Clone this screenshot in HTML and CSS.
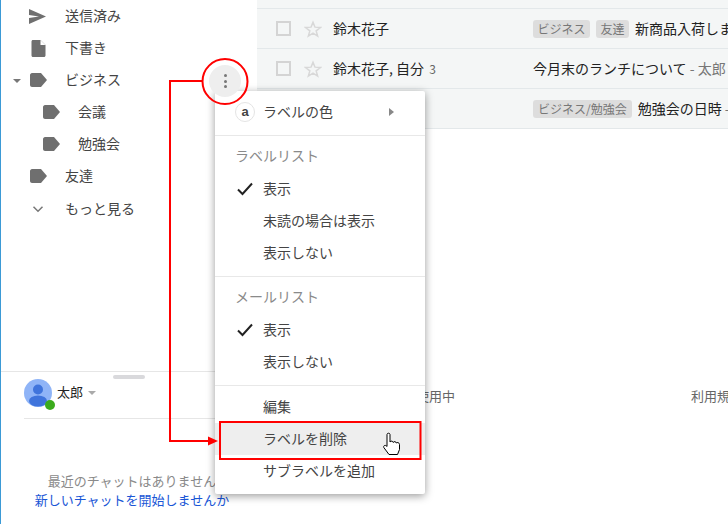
FILE: index.html
```html
<!DOCTYPE html>
<html lang="ja">
<head>
  <meta charset="UTF-8" />
  <title>ラベルを削除</title>
  <link rel="stylesheet" href="styles.css">
</head>
<body>
  <div class="app">
    <aside class="sidebar">
      <nav class="nav">
        <div class="nav-row">
          <svg class="nav-icon nav-send" width="17" height="15" viewBox="0 0 17 15"><path d="M0 0L17 7.500L0 15V9L10 7.500L0 6Z" fill="#6f6f6f"/></svg>
          <span>送信済み</span>
        </div>
        <div class="nav-row">
          <svg class="nav-icon" width="15" height="17" viewBox="0 0 15 17"><path d="M2 0H9.5L14.500 5V15.500C14.500 16.300 13.800 17 13 17H2C1 17 .5 16.300 .5 15.500V1.500C.5 .7 1 0 2 0Z" fill="#6f6f6f"/><path d="M9.500 0V5H14.500Z" fill="#fff"/></svg>
          <span>下書き</span>
        </div>
        <div class="nav-row">
          <svg class="caret" width="8" height="4" viewBox="0 0 8 4"><path d="M0 0H8L4 4Z" fill="#777"/></svg>
          <svg class="nav-icon" width="17" height="14" viewBox="0 0 17 14"><path class="label-shape" d="M2 0H11L17 7L11 14H2C1 14 0 13 0 12V2C0 1 1 0 2 0Z"/></svg>
          <span>ビジネス</span>
        </div>
        <div class="nav-row nav-sub">
          <svg class="nav-icon" width="17" height="14" viewBox="0 0 17 14"><path class="label-shape" d="M2 0H11L17 7L11 14H2C1 14 0 13 0 12V2C0 1 1 0 2 0Z"/></svg>
          <span>会議</span>
        </div>
        <div class="nav-row nav-sub">
          <svg class="nav-icon" width="17" height="14" viewBox="0 0 17 14"><path class="label-shape" d="M2 0H11L17 7L11 14H2C1 14 0 13 0 12V2C0 1 1 0 2 0Z"/></svg>
          <span>勉強会</span>
        </div>
        <div class="nav-row">
          <svg class="nav-icon" width="17" height="14" viewBox="0 0 17 14"><path class="label-shape" d="M2 0H11L17 7L11 14H2C1 14 0 13 0 12V2C0 1 1 0 2 0Z"/></svg>
          <span>友達</span>
        </div>
        <div class="nav-row nav-more">
          <svg class="nav-icon" width="17" height="7" viewBox="0 0 17 7"><path d="M3.500 .8L8 5.300L12.500 .8" fill="none" stroke="#777" stroke-width="1.500"/></svg>
          <span>もっと見る</span>
        </div>
      </nav>

      <section class="chat">
        <div class="grab"></div>
        <div class="chat-user">
          <div class="avatar">
            <svg width="28" height="28" viewBox="0 0 28 28"><circle cx="14" cy="14" r="14" fill="#8fb4f7"/><circle cx="14" cy="10.500" r="5" fill="#3f74dc"/><ellipse cx="14" cy="22" rx="9" ry="5.500" fill="#3f74dc"/></svg>
            <span class="online"></span>
          </div>
          <span class="chat-name">太郎</span>
          <svg width="8" height="4" viewBox="0 0 8 4"><path d="M0 0H8L4 4Z" fill="#aaa"/></svg>
        </div>
        <div class="chat-empty">
          <p>最近のチャットはありません</p>
          <a class="chat-link">新しいチャットを開始しませんか</a>
        </div>
      </section>
    </aside>

    <main class="main">
      <div class="mail-list">
        <div class="mail-row">
          <span class="check"></span>
          <svg class="star" width="18" height="18" viewBox="0 0 24 24"><path d="M12 3L14.600 9.500L22 10L16.200 14.500L18.200 21.500L12 17.600L5.800 21.500L7.800 14.500L2 10L9.400 9.500Z" fill="none" stroke="#d8d8d8" stroke-width="2"/></svg>
          <span class="sender">鈴木花子</span>
          <div class="subject"><span class="chip">ビジネス</span><span class="chip">友達</span><span class="subject-text">新商品入荷しま</span></div>
        </div>
        <div class="mail-row">
          <span class="check"></span>
          <svg class="star" width="18" height="18" viewBox="0 0 24 24"><path d="M12 3L14.600 9.500L22 10L16.200 14.500L18.200 21.500L12 17.600L5.800 21.500L7.800 14.500L2 10L9.400 9.500Z" fill="none" stroke="#d8d8d8" stroke-width="2"/></svg>
          <span class="sender">鈴木花子, 自分 <small>3</small></span>
          <div class="subject"><span class="subject-text">今月末のランチについて</span><span class="subject-text snippet">&nbsp;- 太郎</span></div>
        </div>
        <div class="mail-row">
          <span class="check"></span>
          <svg class="star" width="18" height="18" viewBox="0 0 24 24"><path d="M12 3L14.600 9.500L22 10L16.200 14.500L18.200 21.500L12 17.600L5.800 21.500L7.800 14.500L2 10L9.400 9.500Z" fill="none" stroke="#d8d8d8" stroke-width="2"/></svg>
          <span class="sender">鈴木花子</span>
          <div class="subject"><span class="chip chip-wide">ビジネス/勉強会</span><span class="subject-text">勉強会の日時</span><span class="subject-text snippet">&nbsp;-</span></div>
        </div>
      </div>
      <footer class="mail-footer">
        <span class="usage">0 GB を使用中</span>
        <span class="terms">利用規</span>
      </footer>
    </main>
  </div>

  <div class="menu">
    <div class="menu-section">
      <div class="menu-item menu-color">
        <span class="color-swatch">a</span>
        <span>ラベルの色</span>
        <svg class="submenu-arrow" width="5" height="8" viewBox="0 0 5 8"><path d="M0 0L5 4L0 8Z" fill="#888"/></svg>
      </div>
    </div>
    <div class="menu-section">
      <div class="menu-head">ラベルリスト</div>
      <div class="menu-item">
        <svg class="tick" width="16" height="14" viewBox="0 0 16 14"><path d="M1 7.500L5.500 12L15 1.500" fill="none" stroke="#222" stroke-width="2"/></svg>
        表示
      </div>
      <div class="menu-item">未読の場合は表示</div>
      <div class="menu-item">表示しない</div>
    </div>
    <div class="menu-section">
      <div class="menu-head">メールリスト</div>
      <div class="menu-item">
        <svg class="tick" width="16" height="14" viewBox="0 0 16 14"><path d="M1 7.500L5.500 12L15 1.500" fill="none" stroke="#222" stroke-width="2"/></svg>
        表示
      </div>
      <div class="menu-item">表示しない</div>
    </div>
    <div class="menu-section menu-last">
      <div class="menu-item">編集</div>
      <div class="menu-item is-hover">ラベルを削除</div>
      <div class="menu-item">サブラベルを追加</div>
    </div>
  </div>

  <!-- three-dot button under the callout -->
  <div class="more-btn"><i></i><i></i><i></i></div>

  <!-- red annotation on top of the screenshot -->
  <svg class="callout" width="728" height="524" viewBox="0 0 728 524">
    <circle cx="225" cy="81.500" r="22.500" fill="none" stroke="#f00" stroke-width="2"/>
    <rect x="220" y="422" width="200.500" height="37" fill="none" stroke="#f00" stroke-width="2"/>
    <path d="M202 81H170V441H210" fill="none" stroke="#f00" stroke-width="2"/>
    <path d="M208 436.500L218 441L208 445.500Z" fill="#f00"/>
    <path d="M387 434.500C387 432.800 390 432.800 390 434.500V442C391 440.500 393 441 393.200 442.500C394 441 396 441.500 396.300 443C397 442 399.500 442.500 399.500 444.500V449.500L397.500 454.500H389L383.800 447.500C383 445.500 385.500 444.500 387 446.500Z" fill="#fff" stroke="#000" stroke-width="1"/>
  </svg>
</body>
</html>
```

FILE: styles.css
```css
* {
  box-sizing: border-box;
}
body {
  margin: 0;
  width: 728px;
  height: 524px;
  position: relative;
  overflow: hidden;
  background: #fff;
  color: #444;
  font-family: "Noto Sans CJK JP", "Noto Sans", sans-serif;
  font-size: 14px;
}
.app {
  display: flex;
  height: 524px;
}

/* sidebar */
.sidebar {
  width: 257px;
  flex: none;
  display: flex;
  flex-direction: column;
  border-left: 1px solid #3b9ad6;
}
.nav {
  flex: 1;
}
.nav-row {
  height: 32px;
  padding-left: 29px;
  display: flex;
  align-items: center;
  position: relative;
}
.nav-row span {
  margin-top: -2px;
}
.nav-icon {
  flex: none;
  width: 17px;
  margin-right: 18px;
}
.nav-send {
  margin-left: -1px;
  margin-right: 19px;
}
.nav-sub {
  padding-left: 42px;
}
.nav-more {
  margin-top: 1px;
}
.caret {
  position: absolute;
  left: 12px;
  top: 15px;
}
.label-shape {
  fill: #6f6f6f;
}

/* chat panel */
.chat {
  height: 153px;
  border-top: 1px solid #e6e6e6;
  padding: 0 17px 0 23px;
  position: relative;
}
.grab {
  position: absolute;
  left: 112px;
  top: 3px;
  width: 32px;
  height: 4px;
  border-radius: 2px;
  background: #d9d9dc;
}
.chat-user {
  height: 47px;
  margin-right: -17px;
  padding-top: 7px;
  border-bottom: 1px solid #e6e6e6;
  display: flex;
  align-items: flex-start;
  gap: 5px;
  color: #222;
  font-size: 13px;
}
.chat-user > svg {
  margin-top: 12px;
}
.chat-name {
  line-height: 26px;
}
.avatar {
  position: relative;
  width: 28px;
  height: 28px;
}
.avatar svg {
  display: block;
}
.online {
  position: absolute;
  left: 21px;
  top: 21px;
  width: 10px;
  height: 10px;
  border-radius: 50%;
  background: #3bab1d;
}
.chat-empty {
  margin-top: 52px;
  text-align: center;
  font-size: 13px;
  line-height: 19px;
  color: #8a8a8a;
}
.chat-empty p {
  margin: 0;
}
.chat-link {
  color: #1a56d6;
  white-space: nowrap;
}

/* mail list */
.main {
  flex: 1;
  min-width: 0;
  overflow: hidden;
}
.mail-list {
  padding-top: 8px;
  background: #f4f6f6;
  border-top: 0;
}
.mail-row {
  height: 40px;
  border-top: 1px solid #e3e8ea;
  display: flex;
  align-items: center;
  color: #222;
  white-space: nowrap;
  overflow: hidden;
}
.mail-row:last-child {
  border-bottom: 1px solid #e3e8ea;
  height: 41px;
}
.check {
  flex: none;
  width: 15px;
  height: 15px;
  margin-left: 19px;
  border: 2px solid #d4d4d4;
}
.star {
  flex: none;
  margin-left: 13px;
}
.sender {
  flex: none;
  width: 200px;
  margin-left: 11px;
  margin-top: -2px;
}
.sender small {
  margin-left: 2px;
  font-size: 12px;
  color: #666;
}
.subject {
  display: flex;
  align-items: center;
}
.subject-text {
  margin-top: -2px;
}
.chip {
  height: 18px;
  padding: 0 4.5px;
  margin-right: 6px;
  border-radius: 3px;
  background: #dddddd;
  color: #777;
  font-size: 12px;
  line-height: 17px;
}
.chip-wide {
  padding: 0 5px;
}
.snippet {
  color: #777;
}
.mail-footer {
  margin-top: 258px;
  display: flex;
  font-size: 13px;
  line-height: 17px;
  color: #666;
  white-space: nowrap;
}
.usage {
  flex: none;
  width: 198px;
  text-align: right;
}
.terms {
  flex: none;
  margin-left: 236px;
}

/* label menu */
.menu {
  position: absolute;
  left: 215px;
  top: 91px;
  width: 210px;
  background: #fff;
  border-radius: 2px;
  box-shadow: 0 2px 8px rgba(0, 0, 0, .4);
  color: #444;
}
.menu-section {
  padding: 5px 0 7px;
  border-bottom: 1px solid #e8e8e8;
}
.menu-last {
  border-bottom: 0;
}
.menu-item {
  height: 32px;
  padding-left: 48px;
  padding-bottom: 2px;
  display: flex;
  align-items: center;
  position: relative;
}
.menu-head {
  height: 32px;
  padding-left: 20px;
  padding-bottom: 4px;
  display: flex;
  align-items: center;
  color: #8a8a8a;
}
.is-hover {
  background: #eee;
}
.color-swatch {
  position: absolute;
  left: 20px;
  top: 6px;
  width: 20px;
  height: 20px;
  border: 1px solid #e4e4e4;
  border-radius: 50%;
  text-align: center;
  font-family: "Liberation Sans", sans-serif;
  font-size: 13px;
  font-weight: bold;
  line-height: 17px;
  color: #444;
}
.submenu-arrow {
  position: absolute;
  left: 174px;
  top: 12px;
}
.tick {
  position: absolute;
  left: 22px;
  top: 9px;
}

/* annotation */
.more-btn {
  position: absolute;
  left: 209px;
  top: 65px;
  width: 32px;
  height: 32px;
  border-radius: 50%;
  background: #eeeeee;
  display: flex;
  flex-direction: column;
  align-items: center;
  justify-content: center;
  gap: 2.500px;
}
.more-btn i {
  width: 3px;
  height: 3px;
  border-radius: 50%;
  background: #777;
}
.callout {
  position: absolute;
  left: 0;
  top: 0;
}
```
